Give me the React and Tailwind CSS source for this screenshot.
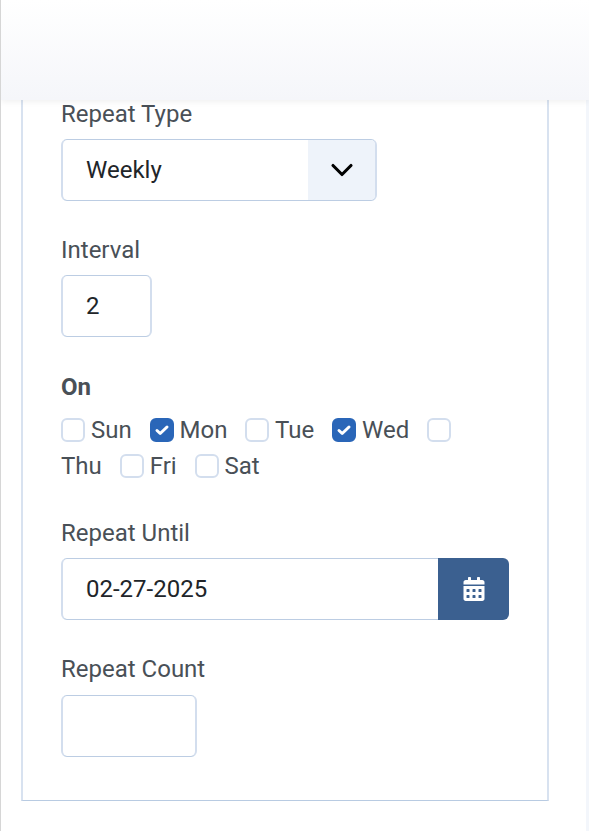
import React from "react";
import { ChevronDown } from "lucide-react";
import { FaCalendarAlt } from "react-icons/fa";

const days = [
  { name: "Sun", checked: false },
  { name: "Mon", checked: true },
  { name: "Tue", checked: false },
  { name: "Wed", checked: true },
  { name: "Thu", checked: false },
  { name: "Fri", checked: false },
  { name: "Sat", checked: false },
];

const DayCheckbox = ({ name, checked }) => (
  <>
    <span
      className={
        "mt-[6px] inline-flex h-6 w-6 items-center justify-center rounded-[6px] border-2 align-top " +
        (checked ? "border-[#2a66b8] bg-[#2a66b8]" : "border-[#d3deee] bg-white")
      }
    >
      {checked && (
        <svg viewBox="0 0 16 16" className="h-4 w-4" fill="none" stroke="white" strokeWidth="3" strokeLinecap="round" strokeLinejoin="round">
          <path d="M3 8.5l3.2 3L13 5" />
        </svg>
      )}
    </span>{" "}
    <span className="mr-3">{name}</span>{" "}
  </>
);

const App = () => {
  return (
    <div className="h-[831px] w-[589px] overflow-hidden border-l border-[#d6d6d6] bg-white font-['Roboto',sans-serif] text-[#495057]">
      <div className="relative z-10 h-[100px] w-[588px] bg-gradient-to-b from-white to-[#f5f6fa] shadow-[0_2px_6px_rgba(0,0,0,0.06)]" />

      <div className="h-[731px] border-r-[3px] border-[#f3f6fb] pl-5 pr-[37px]">
        <div className="h-[701px] border-x-2 border-b border-[#d8e2f0] border-b-[#b8cbe2] px-[38px]">
          <label className="block pt-px text-[24px] leading-[26px]">Repeat Type</label>
          <div className="mt-3 flex h-[62px] w-[316px] overflow-hidden rounded-[6px] border-x-2 border-y border-[#d3deee] border-y-[#bccde3]">
            <span className="flex flex-1 items-center pl-[23px] text-[24px] text-[#212529]">Weekly</span>
            <span className="flex w-[67px] items-center justify-center bg-[#eef3fa]">
              <ChevronDown className="h-9 w-9 text-black" strokeWidth={2.1} />
            </span>
          </div>

          <label className="mt-9 block text-[24px] leading-[26px]">Interval</label>
          <div className="mt-3 flex h-[62px] w-[91px] items-center rounded-[6px] border-x-2 border-y border-[#d3deee] border-y-[#bccde3] pl-[23px] text-[24px] text-[#212529]">
            2
          </div>

          <div className="mt-[37px] text-[24px] font-bold leading-[26px]">On</div>
          <div className="mt-3 text-[24px] leading-[36px]">
            {days.map((day) => (
              <DayCheckbox key={day.name} name={day.name} checked={day.checked} />
            ))}
          </div>

          <label className="mt-9 block text-[24px] leading-[26px]">Repeat Until</label>
          <div className="mt-3 flex h-[62px] w-[448px]">
            <div className="flex flex-1 items-center rounded-l-[6px] border-y border-l-2 border-[#d3deee] border-y-[#bccde3] pl-[23px] text-[24px] text-[#212529]">
              02-27-2025
            </div>
            <div className="flex w-[71px] items-center justify-center rounded-r-[6px] bg-[#3b6090]">
              <FaCalendarAlt className="text-[24px] text-white" />
            </div>
          </div>

          <label className="mt-9 block text-[24px] leading-[26px]">Repeat Count</label>
          <div className="mt-[13px] h-[62px] w-[136px] rounded-[6px] border-x-2 border-y border-[#d3deee] border-y-[#bccde3]" />
        </div>
      </div>
    </div>
  );
};

export default App;
